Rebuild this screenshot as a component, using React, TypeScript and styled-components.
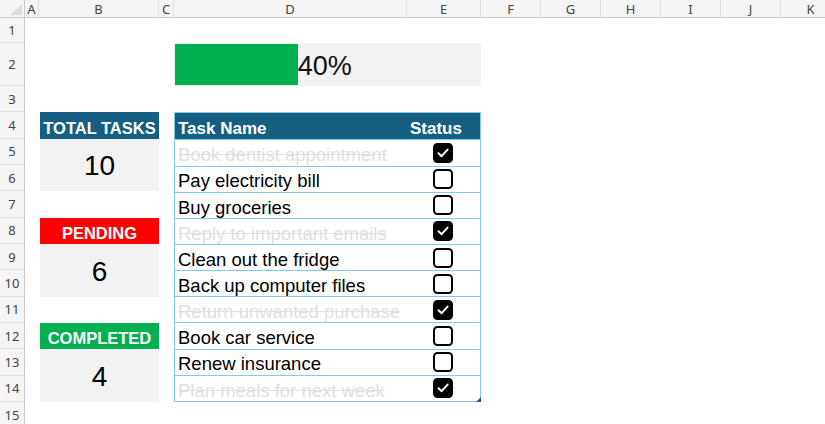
import React from "react";
import styled, { createGlobalStyle } from "styled-components";

const GlobalStyle = createGlobalStyle`
  html, body {
    margin: 0;
    padding: 0;
    background: #ffffff;
    overflow: hidden;
  }
  * { box-sizing: border-box; }
`;

type Task = { name: string; done: boolean };

const tasks: Task[] = [
  { name: "Book dentist appointment", done: true },
  { name: "Pay electricity bill", done: false },
  { name: "Buy groceries", done: false },
  { name: "Reply to important emails", done: true },
  { name: "Clean out the fridge", done: false },
  { name: "Back up computer files", done: false },
  { name: "Return unwanted purchase", done: true },
  { name: "Book car service", done: false },
  { name: "Renew insurance", done: false },
  { name: "Plan meals for next week", done: true },
];

const COLS = ["A", "B", "C", "D", "E", "F", "G", "H", "I", "J", "K"];
const ROWS = Array.from({ length: 15 }, (_, i) => i + 1);

const Sheet = styled.div`
  display: grid;
  grid-template-columns: 25px 14px 120px 15px 233px 74px repeat(6, 60px);
  grid-template-rows: 18px 25px 43px repeat(13, 26.333px);
  width: 825px;
  height: 424px;
  overflow: hidden;
  font-family: "Liberation Sans", Arial, sans-serif;
`;

const Corner = styled.div`
  grid-column: 1;
  grid-row: 1;
  position: relative;
  background: #f5f5f5;
  border-right: 1px solid #c9c9c9;
  border-bottom: 1px solid #c9c9c9;
  &::after {
    content: "";
    position: absolute;
    right: 2px;
    bottom: 2px;
    width: 12px;
    height: 11px;
    background: #dcdcdc;
    clip-path: polygon(100% 0, 100% 100%, 0 100%);
  }
`;

const ColHeader = styled.div<{ $col: number }>`
  grid-column: ${(p) => p.$col};
  grid-row: 1;
  display: flex;
  align-items: center;
  justify-content: center;
  background: #f5f5f5;
  border-right: 1px solid #e0e0e0;
  border-bottom: 1px solid #c9c9c9;
  font-family: "Noto Sans", "Open Sans", sans-serif;
  font-size: 13px;
  color: #444444;
  padding-top: 1px;
`;

const RowHeader = styled.div<{ $row: number }>`
  grid-column: 1;
  grid-row: ${(p) => p.$row};
  display: flex;
  align-items: center;
  justify-content: center;
  background: #f5f5f5;
  border-right: 1px solid #c9c9c9;
  border-bottom: 1px solid #e0e0e0;
  font-family: "Noto Sans", "Open Sans", sans-serif;
  font-size: 13px;
  color: #444444;
`;

const ProgressCell = styled.div`
  grid-column: 5 / 7;
  grid-row: 3;
  display: flex;
  align-items: center;
  background: #f2f2f2;
`;

const ProgressFill = styled.div`
  align-self: stretch;
  margin: 1px 0 1px 1px;
  background: #00b050;
`;

const ProgressText = styled.span`
  font-size: 27px;
  line-height: 1;
  color: #111111;
  padding-top: 4px;
`;

const Card = styled.div<{ $row: number }>`
  grid-column: 3;
  grid-row: ${(p) => p.$row} / span 3;
  display: grid;
  grid-template-rows: 1fr 2fr;
  margin-left: 1px;
`;

const CardTitle = styled.div<{ $bg: string }>`
  display: flex;
  align-items: flex-end;
  justify-content: center;
  background: ${(p) => p.$bg};
  color: #ffffff;
  font-weight: 700;
  font-size: 16.5px;
  line-height: 1.15;
  padding-bottom: 1px;
`;

const CardValue = styled.div`
  display: flex;
  align-items: center;
  justify-content: center;
  background: #f2f2f2;
  font-size: 28px;
  line-height: 1;
  color: #000000;
  padding-top: 3px;
`;

const Table = styled.div`
  grid-column: 5 / 7;
  grid-row: 5 / span 11;
  position: relative;
  display: flex;
  flex-direction: column;
  border-left: 1px solid #83cbeb;
  border-right: 1px solid #83cbeb;
`;

const TableRow = styled.div<{ $head?: boolean }>`
  flex: 1 1 0;
  min-height: 0;
  display: grid;
  grid-template-columns: 1fr 73px;
  align-items: end;
  border-bottom: 1px solid #83cbeb;
  ${(p) =>
    p.$head
      ? `
    background: #156082;
    border-top: 1px solid #83cbeb;
    color: #ffffff;
    font-weight: 700;
    font-size: 17px;
    padding-bottom: 1px;
  `
      : `
    font-size: 18.5px;
    color: #000000;
  `}
`;

const NameCell = styled.div<{ $done?: boolean }>`
  padding-left: 3px;
  line-height: 1.15;
  white-space: nowrap;
  color: ${(p) => (p.$done ? "#e0e0e0" : "inherit")};
  text-decoration: ${(p) => (p.$done ? "line-through" : "none")};
  text-decoration-color: #e0e0e0;
`;

const StatusHead = styled.div`
  padding-left: 3px;
  line-height: 1.15;
`;

const StatusCell = styled.div`
  align-self: center;
  display: flex;
  justify-content: center;
  padding-right: 1px;
`;

const ResizeHandle = styled.div`
  position: absolute;
  right: -1px;
  bottom: 0px;
  width: 5px;
  height: 5px;
  background: #2b4fa8;
  clip-path: polygon(100% 0, 100% 100%, 0 100%);
`;

const CheckBox: React.FC<{ checked: boolean }> = ({ checked }) => (
  <svg width="20" height="20" viewBox="0 0 20 20">
    <rect
      x="1"
      y="1"
      width="18"
      height="18"
      rx="3.5"
      fill={checked ? "#000000" : "#ffffff"}
      stroke="#000000"
      strokeWidth="2"
    />
    {checked && (
      <path
        d="M5.5 10.2 L8.6 13.2 L14.6 6.6"
        fill="none"
        stroke="#ffffff"
        strokeWidth="2"
        strokeLinecap="round"
        strokeLinejoin="round"
      />
    )}
  </svg>
);

export default function App() {
  const total = tasks.length;
  const completed = tasks.filter((t) => t.done).length;
  const pending = total - completed;
  const pct = Math.round((completed / total) * 100);

  return (
    <>
      <GlobalStyle />
      <Sheet>
        <Corner />
        {COLS.map((c, i) => (
          <ColHeader key={c} $col={i + 2}>
            {c}
          </ColHeader>
        ))}
        {ROWS.map((r) => (
          <RowHeader key={r} $row={r + 1}>
            {r}
          </RowHeader>
        ))}

        <ProgressCell>
          <ProgressFill style={{ width: `${pct}%` }} />
          <ProgressText>{pct}%</ProgressText>
        </ProgressCell>

        <Card $row={5}>
          <CardTitle $bg="#156082">TOTAL TASKS</CardTitle>
          <CardValue>{total}</CardValue>
        </Card>
        <Card $row={9}>
          <CardTitle $bg="#ff0000">PENDING</CardTitle>
          <CardValue>{pending}</CardValue>
        </Card>
        <Card $row={13}>
          <CardTitle $bg="#00b050">COMPLETED</CardTitle>
          <CardValue>{completed}</CardValue>
        </Card>

        <Table>
          <TableRow $head>
            <NameCell>Task Name</NameCell>
            <StatusHead>Status</StatusHead>
          </TableRow>
          {tasks.map((t) => (
            <TableRow key={t.name}>
              <NameCell $done={t.done}>{t.name}</NameCell>
              <StatusCell>
                <CheckBox checked={t.done} />
              </StatusCell>
            </TableRow>
          ))}
          <ResizeHandle />
        </Table>
      </Sheet>
    </>
  );
}
